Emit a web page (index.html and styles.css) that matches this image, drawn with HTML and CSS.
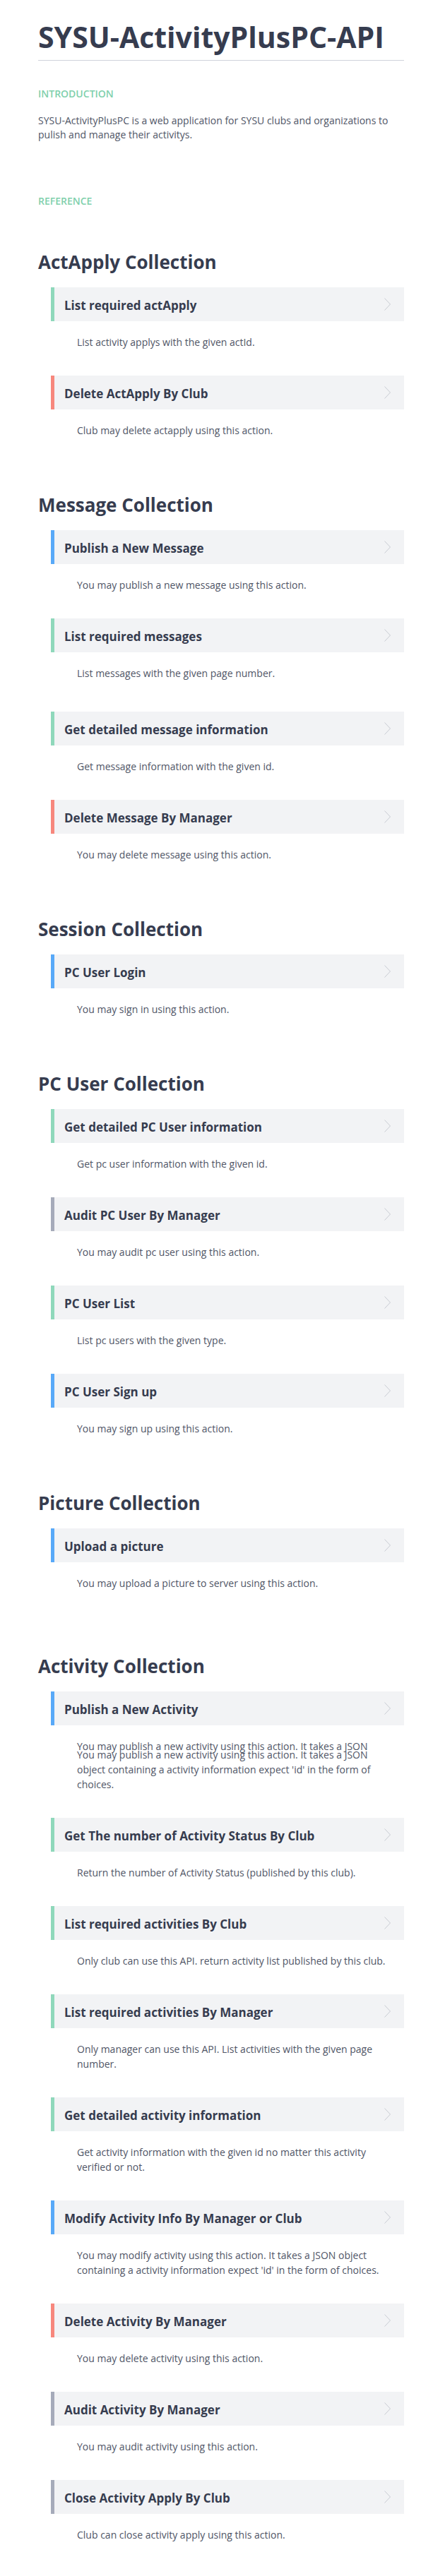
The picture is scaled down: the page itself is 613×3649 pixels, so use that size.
FILE: index.html
```html
<!DOCTYPE html>
<html lang="en">
<head>
<meta charset="utf-8">
<title>SYSU-ActivityPlusPC-API</title>
<link rel="stylesheet" href="styles.css">
</head>
<body>
<main class="doc">
  <header class="head">
    <h1 class="title">SYSU-ActivityPlusPC-API</h1>
  </header>

  <section class="intro">
    <h3 class="label">INTRODUCTION</h3>
    <p class="intro-text">SYSU-ActivityPlusPC is a web application for SYSU clubs and organizations to pulish and manage their activitys.</p>
    <h3 class="label label-ref">REFERENCE</h3>
  </section>

  <section class="group group-first">
    <h2 class="group-title">ActApply Collection</h2>
    <div class="actions">
      <div class="action">
        <div class="action-head m-get"><span class="action-name">List required actApply</span><svg class="chev" viewBox="0 0 9 18" width="9" height="18"><polyline points="0.5,0.5 8.5,9 0.5,17.5"/></svg></div>
        <p class="action-desc">List activity applys with the given actId.</p>
      </div>
      <div class="action">
        <div class="action-head m-del"><span class="action-name">Delete ActApply By Club</span><svg class="chev" viewBox="0 0 9 18" width="9" height="18"><polyline points="0.5,0.5 8.5,9 0.5,17.5"/></svg></div>
        <p class="action-desc">Club may delete actapply using this action.</p>
      </div>
    </div>
  </section>

  <section class="group">
    <h2 class="group-title">Message Collection</h2>
    <div class="actions">
      <div class="action">
        <div class="action-head m-post"><span class="action-name">Publish a New Message</span><svg class="chev" viewBox="0 0 9 18" width="9" height="18"><polyline points="0.5,0.5 8.5,9 0.5,17.5"/></svg></div>
        <p class="action-desc">You may publish a new message using this action.</p>
      </div>
      <div class="action action-extra">
        <div class="action-head m-get"><span class="action-name">List required messages</span><svg class="chev" viewBox="0 0 9 18" width="9" height="18"><polyline points="0.5,0.5 8.5,9 0.5,17.5"/></svg></div>
        <p class="action-desc">List messages with the given page number.</p>
      </div>
      <div class="action">
        <div class="action-head m-get"><span class="action-name">Get detailed message information</span><svg class="chev" viewBox="0 0 9 18" width="9" height="18"><polyline points="0.5,0.5 8.5,9 0.5,17.5"/></svg></div>
        <p class="action-desc">Get message information with the given id.</p>
      </div>
      <div class="action">
        <div class="action-head m-del"><span class="action-name">Delete Message By Manager</span><svg class="chev" viewBox="0 0 9 18" width="9" height="18"><polyline points="0.5,0.5 8.5,9 0.5,17.5"/></svg></div>
        <p class="action-desc">You may delete message using this action.</p>
      </div>
    </div>
  </section>

  <section class="group">
    <h2 class="group-title">Session Collection</h2>
    <div class="actions">
      <div class="action">
        <div class="action-head m-post"><span class="action-name">PC User Login</span><svg class="chev" viewBox="0 0 9 18" width="9" height="18"><polyline points="0.5,0.5 8.5,9 0.5,17.5"/></svg></div>
        <p class="action-desc">You may sign in using this action.</p>
      </div>
    </div>
  </section>

  <section class="group">
    <h2 class="group-title">PC User Collection</h2>
    <div class="actions">
      <div class="action">
        <div class="action-head m-get"><span class="action-name">Get detailed PC User information</span><svg class="chev" viewBox="0 0 9 18" width="9" height="18"><polyline points="0.5,0.5 8.5,9 0.5,17.5"/></svg></div>
        <p class="action-desc">Get pc user information with the given id.</p>
      </div>
      <div class="action">
        <div class="action-head m-put"><span class="action-name">Audit PC User By Manager</span><svg class="chev" viewBox="0 0 9 18" width="9" height="18"><polyline points="0.5,0.5 8.5,9 0.5,17.5"/></svg></div>
        <p class="action-desc">You may audit pc user using this action.</p>
      </div>
      <div class="action">
        <div class="action-head m-get"><span class="action-name">PC User List</span><svg class="chev" viewBox="0 0 9 18" width="9" height="18"><polyline points="0.5,0.5 8.5,9 0.5,17.5"/></svg></div>
        <p class="action-desc">List pc users with the given type.</p>
      </div>
      <div class="action">
        <div class="action-head m-post"><span class="action-name">PC User Sign up</span><svg class="chev" viewBox="0 0 9 18" width="9" height="18"><polyline points="0.5,0.5 8.5,9 0.5,17.5"/></svg></div>
        <p class="action-desc">You may sign up using this action.</p>
      </div>
    </div>
  </section>

  <section class="group">
    <h2 class="group-title">Picture Collection</h2>
    <div class="actions">
      <div class="action action-extra-lg">
        <div class="action-head m-post"><span class="action-name">Upload a picture</span><svg class="chev" viewBox="0 0 9 18" width="9" height="18"><polyline points="0.5,0.5 8.5,9 0.5,17.5"/></svg></div>
        <p class="action-desc">You may upload a picture to server using this action.</p>
      </div>
    </div>
  </section>

  <section class="group">
    <h2 class="group-title">Activity Collection</h2>
    <div class="actions">
      <div class="action">
        <div class="action-head m-post"><span class="action-name">Publish a New Activity</span><svg class="chev" viewBox="0 0 9 18" width="9" height="18"><polyline points="0.5,0.5 8.5,9 0.5,17.5"/></svg></div>
        <div class="action-desc desc-overlap">
          <span class="ghost-line">You may publish a new activity using this action. It takes a JSON</span>
          <p class="desc-body">You may publish a new activity using this action. It takes a JSON object containing a activity information expect 'id' in the form of choices.</p>
        </div>
      </div>
      <div class="action">
        <div class="action-head m-get"><span class="action-name">Get The number of Activity Status By Club</span><svg class="chev" viewBox="0 0 9 18" width="9" height="18"><polyline points="0.5,0.5 8.5,9 0.5,17.5"/></svg></div>
        <p class="action-desc">Return the number of Activity Status (published by this club).</p>
      </div>
      <div class="action">
        <div class="action-head m-get"><span class="action-name">List required activities By Club</span><svg class="chev" viewBox="0 0 9 18" width="9" height="18"><polyline points="0.5,0.5 8.5,9 0.5,17.5"/></svg></div>
        <p class="action-desc">Only club can use this API. return activity list published by this club.</p>
      </div>
      <div class="action">
        <div class="action-head m-get"><span class="action-name">List required activities By Manager</span><svg class="chev" viewBox="0 0 9 18" width="9" height="18"><polyline points="0.5,0.5 8.5,9 0.5,17.5"/></svg></div>
        <p class="action-desc">Only manager can use this API. List activities with the given page number.</p>
      </div>
      <div class="action">
        <div class="action-head m-get"><span class="action-name">Get detailed activity information</span><svg class="chev" viewBox="0 0 9 18" width="9" height="18"><polyline points="0.5,0.5 8.5,9 0.5,17.5"/></svg></div>
        <p class="action-desc">Get activity information with the given id no matter this activity verified or not.</p>
      </div>
      <div class="action">
        <div class="action-head m-post"><span class="action-name">Modify Activity Info By Manager or Club</span><svg class="chev" viewBox="0 0 9 18" width="9" height="18"><polyline points="0.5,0.5 8.5,9 0.5,17.5"/></svg></div>
        <p class="action-desc">You may modify activity using this action. It takes a JSON object containing a activity information expect 'id' in the form of choices.</p>
      </div>
      <div class="action">
        <div class="action-head m-del"><span class="action-name">Delete Activity By Manager</span><svg class="chev" viewBox="0 0 9 18" width="9" height="18"><polyline points="0.5,0.5 8.5,9 0.5,17.5"/></svg></div>
        <p class="action-desc">You may delete activity using this action.</p>
      </div>
      <div class="action">
        <div class="action-head m-put"><span class="action-name">Audit Activity By Manager</span><svg class="chev" viewBox="0 0 9 18" width="9" height="18"><polyline points="0.5,0.5 8.5,9 0.5,17.5"/></svg></div>
        <p class="action-desc">You may audit activity using this action.</p>
      </div>
      <div class="action">
        <div class="action-head m-put"><span class="action-name">Close Activity Apply By Club</span><svg class="chev" viewBox="0 0 9 18" width="9" height="18"><polyline points="0.5,0.5 8.5,9 0.5,17.5"/></svg></div>
        <p class="action-desc">Club can close activity apply using this action.</p>
      </div>
    </div>
  </section>
</main>
</body>
</html>
```

FILE: styles.css
```css
html, body {
  margin: 0;
  padding: 0;
  background: #ffffff;
}

body {
  font-family: "Open Sans", "Noto Sans", "Liberation Sans", sans-serif;
  color: #363c4f;
}

.doc {
  width: 518px;
  margin-left: 54px;
  padding: 28px 0 50px;
  display: flex;
  flex-direction: column;
}

.title {
  margin: 0;
  font-size: 41px;
  line-height: 49px;
  font-weight: 700;
  color: #363c4f;
  padding-bottom: 8px;
  border-bottom: 1px solid #cfd3db;
}

.intro {
  display: flex;
  flex-direction: column;
}

.label {
  margin: 37px 0 0;
  font-size: 14px;
  line-height: 20px;
  font-weight: 600;
  color: #7fd0ac;
}

.label-ref {
  margin-top: 74px;
}

.intro-text {
  margin: 18px 0 0;
  font-size: 14px;
  line-height: 20px;
  color: #4f5566;
}

.group {
  margin-top: 78px;
}

.group-first {
  margin-top: 59px;
}

.group-title {
  margin: 0 0 19px;
  font-size: 26px;
  line-height: 34px;
  font-weight: 700;
  color: #363c4f;
}

.actions {
  display: flex;
  flex-direction: column;
  gap: 37px;
  margin-left: 18px;
}

.action-extra {
  margin-bottom: 7px;
}

.action-extra-lg {
  margin-bottom: 12px;
}

.action-head {
  box-sizing: border-box;
  height: 48px;
  padding: 2px 19px 0 14px;
  display: flex;
  align-items: center;
  justify-content: space-between;
  background: #f2f3f5;
  border-left: 5px solid #a6abba;
}

.m-get { border-left-color: #8fd8bb; }
.m-del { border-left-color: #f7877d; }
.m-post { border-left-color: #58a9f8; }
.m-put { border-left-color: #a6abba; }

.action-name {
  font-size: 17px;
  line-height: 23px;
  font-weight: 700;
  color: #363c4f;
}

.chev {
  flex: none;
  margin-top: -2px;
}

.chev polyline {
  fill: none;
  stroke: #c8cbd2;
  stroke-width: 1;
}

.action-desc {
  margin: 19px 14px 0 37px;
  font-size: 14px;
  line-height: 21px;
  color: #4f5566;
}

.desc-overlap {
  position: relative;
  padding-top: 12px;
}

.ghost-line {
  position: absolute;
  left: 0;
  top: 0;
  white-space: nowrap;
}

.desc-body {
  margin: 0;
}
```
